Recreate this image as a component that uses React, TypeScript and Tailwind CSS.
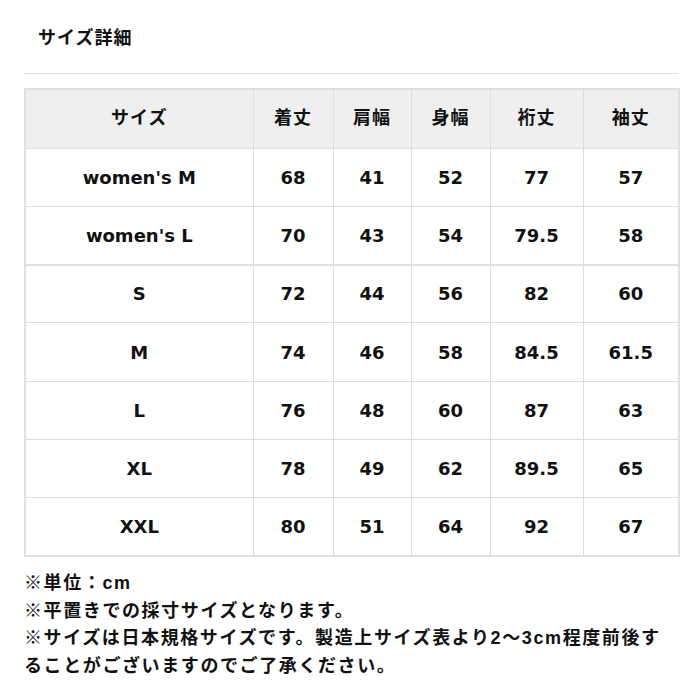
import React from "react";

const cols = ["サイズ", "着丈", "肩幅", "身幅", "裄丈", "袖丈"];
const widths = ["w-[228px]", "w-[80px]", "w-[78px]", "w-[79px]", "w-[93px]", "w-[96px]"];
const rows: string[][] = [
  ["women's M", "68", "41", "52", "77", "57"],
  ["women's L", "70", "43", "54", "79.5", "58"],
  ["S", "72", "44", "56", "82", "60"],
  ["M", "74", "46", "58", "84.5", "61.5"],
  ["L", "76", "48", "60", "87", "63"],
  ["XL", "78", "49", "62", "89.5", "65"],
  ["XXL", "80", "51", "64", "92", "67"],
];

const font = { fontFamily: '"Liberation Sans", "Noto Sans CJK JP", sans-serif' };
const cellFont = { fontFamily: '"DejaVu Sans", "Noto Sans CJK JP", sans-serif' };

export default function App() {
  return (
    <div className="w-[700px] h-[700px] bg-white text-[#111]" style={font}>
      <div className="pl-[38px] pt-[26px] h-[73px] text-[18px] tracking-[1px] font-bold leading-[24px]">サイズ詳細</div>
      <div className="mx-[24px] w-[654px] border-t border-[#dcdcdc]" />
      <div className="pl-[24px] pt-[14px]">
        <table className="border-collapse border-2 border-[#e0e0e0] table-fixed w-[654px]">
          <thead>
            <tr className="bg-[#efefef] h-[59px]">
              {cols.map((c, i) => (
                <th key={c} className={`${widths[i]} border border-[#dddddd] text-[18px] tracking-[1px] font-bold text-center align-middle`}>
                  {c}
                </th>
              ))}
            </tr>
          </thead>
          <tbody>
            {rows.map((r) => (
              <tr key={r[0]} className="h-[58.3px]">
                {r.map((v, i) => (
                  <td
                    key={i}
                    style={cellFont}
                    className={`border border-[#dddddd] text-[18px] text-center align-middle font-bold ${r[0] === "S" ? "border-t-2 border-t-[#e0e0e0]" : ""}`}
                  >
                    {v}
                  </td>
                ))}
              </tr>
            ))}
          </tbody>
        </table>
      </div>
      <div className="pl-[24px] pt-[13px] text-[18px] tracking-[1.6px] font-bold leading-[27.5px] whitespace-nowrap">
        <div>※単位：cm</div>
        <div>※平置きでの採寸サイズとなります。</div>
        <div>※サイズは日本規格サイズです。製造上サイズ表より2〜3cm程度前後す</div>
        <div>ることがございますのでご了承ください。</div>
      </div>
    </div>
  );
}
